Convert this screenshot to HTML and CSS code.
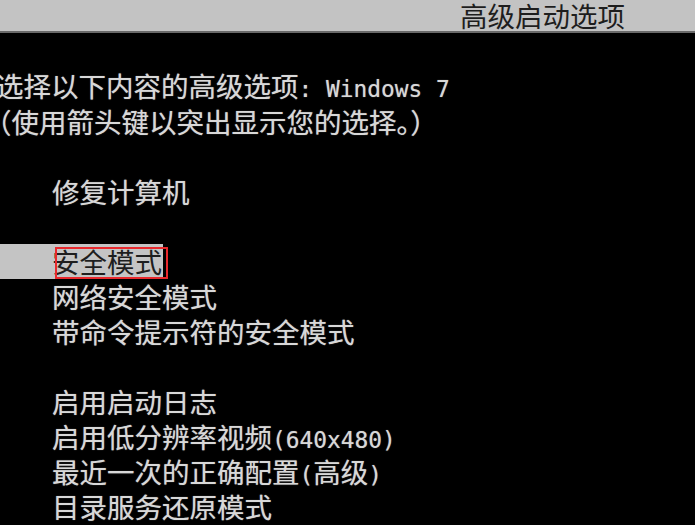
FILE: index.html
```html
<!DOCTYPE html>
<html lang="zh-CN">
<head>
<meta charset="utf-8">
<title>高级启动选项</title>
<link rel="stylesheet" href="styles.css">
</head>
<body>
<div class="page">
  <div class="titlebar"><span class="title">高级启动选项</span></div>
  <div class="screen">
    <div class="line l1">选择以下内容的高级选项<span class="lat">: Windows 7</span></div>
    <div class="line l2">（使用箭头键以突出显示您的选择。）</div>
    <div class="line"></div>
    <div class="line item">修复计算机</div>
    <div class="line"></div>
    <div class="line sel"><span class="hl">安全模式<span class="mark"></span></span></div>
    <div class="line item">网络安全模式</div>
    <div class="line item">带命令提示符的安全模式</div>
    <div class="line"></div>
    <div class="line item">启用启动日志</div>
    <div class="line item">启用低分辨率视频<span class="lat">(640x480)</span></div>
    <div class="line item">最近一次的正确配置<span class="lat">(</span>高级<span class="lat">)</span></div>
    <div class="line item">目录服务还原模式</div>
  </div>
</div>
</body>
</html>
```

FILE: styles.css
```css
html, body {
  margin: 0;
  padding: 0;
  background: #000;
}

.page {
  width: 695px;
  height: 525px;
  overflow: hidden;
  background: #000;
  font-family: "Noto Sans CJK SC", "Noto Sans", sans-serif;
  font-size: 27.5px;
}

.titlebar {
  height: 31px;
  background: #c3c3c3;
  border-bottom: 2px solid #6a6a6a;
  padding-left: 460px;
  line-height: 31px;
  color: #1e1e1e;
  white-space: nowrap;
}

.title {
  display: inline-block;
}

.screen {
  padding-top: 37px;
}

.line {
  height: 35px;
  line-height: 35px;
  white-space: pre;
  color: #d8d8d8;
  text-shadow: 0 0 1px rgba(220, 220, 220, 0.6);
}

.l1 {
  margin-left: -4px;
  margin-top: -2px;
  margin-bottom: 1px;
}

.l2 {
  margin-left: -16px;
}

.item {
  padding-left: 52px;
}

.hl {
  position: relative;
  display: block;
  width: 111px;
  padding-left: 52px;
  background: #c4c4c4;
  color: #1e1e1e;
  text-shadow: none;
}

.mark {
  position: absolute;
  left: 55px;
  top: 3px;
  width: 109px;
  height: 28px;
  border: 2px solid #e8282c;
}

.lat {
  font-family: "DejaVu Sans Mono", "Liberation Mono", monospace;
  font-size: 22.85px;
}
```
